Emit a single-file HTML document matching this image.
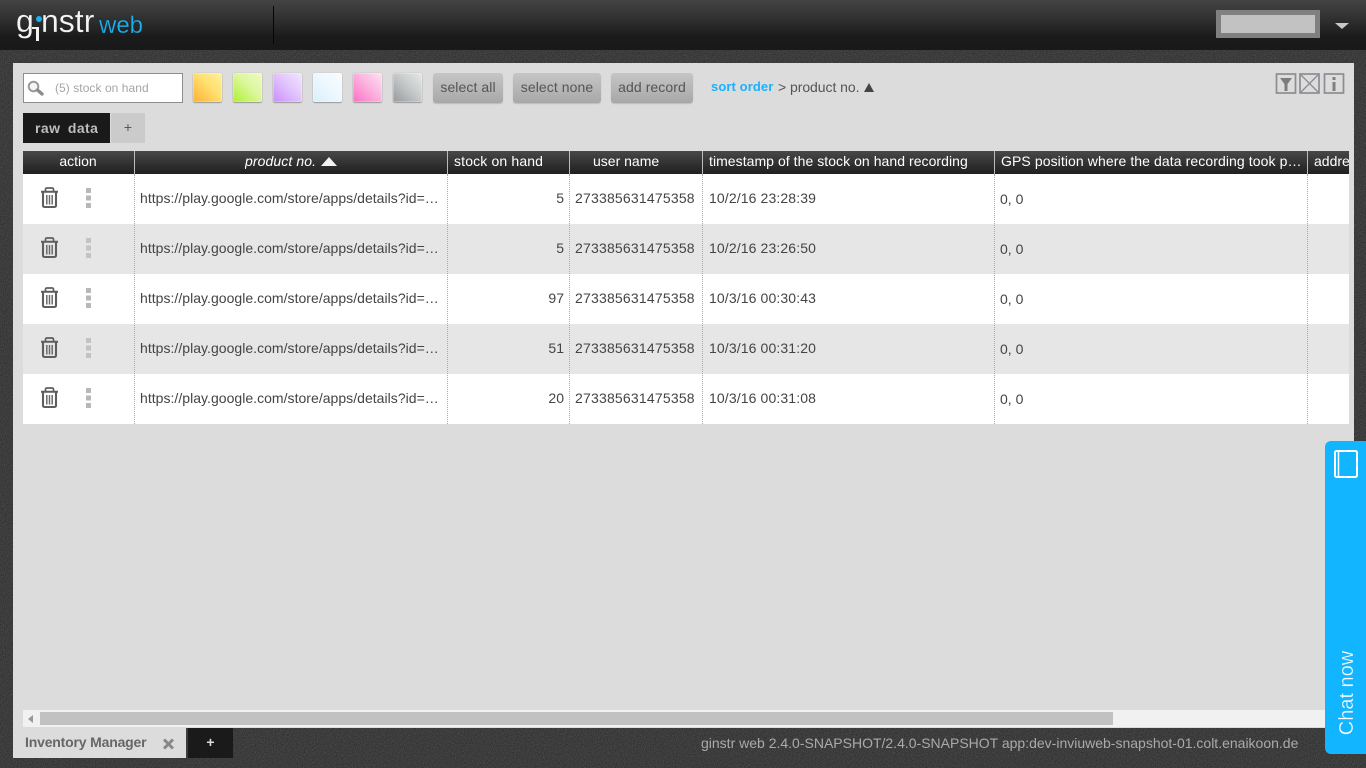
<!DOCTYPE html>
<html>
<head>
<meta charset="utf-8">
<style>
*{box-sizing:border-box}
html,body{margin:0;padding:0;width:1366px;height:768px;overflow:hidden;background:#2e2e2e;font-family:"Liberation Sans",Arial,sans-serif;color:#444}
.a{position:absolute;white-space:nowrap}
#hdr{left:0;top:0;width:1366px;height:50px;background:linear-gradient(#444 0,#2c2c2c 45%,#1a1a1a 75%,#191919 100%)}
#panel{left:13px;top:63px;width:1341px;height:665px;background:#dcdcdc}
.sw{top:73px;width:29px;height:29px;border-radius:2px;box-shadow:0 1px 1px #999,0 0 1px #aaa,inset 0 0 0 1px rgba(255,255,255,.25)}
.btn{top:73px;height:30px;border-radius:3px;background:linear-gradient(#c6c6c6,#a8a8a8);color:#555;font-size:14px;line-height:28px;text-align:center;box-shadow:0 1px 1px #bbb;letter-spacing:.08px}
.hd{top:151px;height:23px;line-height:21px;color:#fff;font-size:14px;background:linear-gradient(#484848,#1f1f1f);overflow:hidden}
.r{left:23px;width:1326px;height:50px}
.sep{width:0;border-left:1px dotted #aaa;top:174px;height:250px}
.hsep{width:1px;background:#bbb;top:151px;height:23px}
.t{font-size:14px;color:#444;line-height:16px}
.u{letter-spacing:.03px}
.n{letter-spacing:.2px}
.d{letter-spacing:.12px}
.lg{font-size:32px;line-height:40px;color:#f4f4f4;-webkit-text-stroke:.15px #262626}
</style>
</head>
<body>
<svg class="a" style="left:0;top:0;width:1366px;height:768px" width="1366" height="768">
<filter id="n"><feTurbulence type="fractalNoise" baseFrequency="0.9" numOctaves="2"/><feColorMatrix values="0 0 0 0 0.5 0 0 0 0 0.5 0 0 0 0 0.5 0 0 0 0.35 -0.06"/></filter>
<rect width="1366" height="768" fill="#2c2c2c"/><rect width="1366" height="768" filter="url(#n)"/>
</svg>

<div class="a" id="hdr"></div>
<div class="a lg" style="left:16px;top:1px">g</div>
<div class="a" style="left:36px;top:27px;width:3px;height:14px;background:#f2f2f2"></div>
<div class="a" style="left:32px;top:27px;width:5px;height:2px;background:#f2f2f2"></div>
<div class="a" style="left:36px;top:16px;width:6px;height:6px;border-radius:50%;background:#19b1ef"></div>
<div class="a lg" style="left:41px;top:1px">nstr</div>
<div class="a" style="left:99px;top:11px;font-size:24px;line-height:30px;color:#19b1ef;-webkit-text-stroke:.2px #222">web</div>
<div class="a" style="left:273px;top:6px;width:1px;height:38px;background:#050505"></div>
<div class="a" style="left:1216px;top:10px;width:104px;height:28px;background:#c2c2c2;border:5px solid #808080"></div>
<div class="a" style="left:1335px;top:23px;width:0;height:0;border-left:7px solid transparent;border-right:7px solid transparent;border-top:6px solid #c8c8c8"></div>

<div class="a" id="panel"></div>

<!-- search -->
<div class="a" style="left:23px;top:73px;width:160px;height:30px;background:#fff;border:1px solid #8e8e8e"></div>
<svg class="a" style="left:26px;top:79px" width="20" height="18" viewBox="0 0 20 18"><circle cx="7.5" cy="7.5" r="4.8" fill="#f4f4f4" stroke="#9a9a9a" stroke-width="2"/><path d="M11.500 11L16 15" stroke="#8c8c8c" stroke-width="3.400" stroke-linecap="round"/></svg>
<div class="a" style="left:55px;top:80px;font-size:12px;line-height:16px;color:#a5a5a5;letter-spacing:.06px">(5) stock on hand</div>

<!-- swatches -->
<div class="a sw" style="left:193px;background:linear-gradient(45deg,#ffb030,#ffdf70 55%,#fff09a)"></div>
<div class="a sw" style="left:233px;background:linear-gradient(45deg,#aef032,#dcf79c 55%,#eefbc4)"></div>
<div class="a sw" style="left:273px;background:linear-gradient(45deg,#cb8dfc,#e2c6fd 55%,#f2e6fe)"></div>
<div class="a sw" style="left:313px;background:linear-gradient(45deg,#d8effd,#eef8fe 55%,#f8fcff)"></div>
<div class="a sw" style="left:353px;background:linear-gradient(45deg,#fb70c4,#fcb4e0 55%,#fde2f2)"></div>
<div class="a sw" style="left:393px;background:linear-gradient(45deg,#969a9c,#c8cbcc 55%,#e6e8e8)"></div>

<div class="a btn" style="left:433px;width:70px">select all</div>
<div class="a btn" style="left:513px;width:88px">select none</div>
<div class="a btn" style="left:611px;width:82px">add record</div>

<div class="a" style="left:711px;top:79px;font-size:13px;line-height:16px;font-weight:bold;color:#19b1ff;letter-spacing:.1px">sort order</div>
<div class="a" style="left:778px;top:79px;font-size:14px;line-height:16px;color:#555;letter-spacing:-.05px">&gt; product no.</div>
<div class="a" style="left:864px;top:83px;width:0;height:0;border-left:5.5px solid transparent;border-right:5.5px solid transparent;border-bottom:9px solid #444"></div>

<!-- top right icons -->
<svg class="a" style="left:1275px;top:73px" width="70" height="21" viewBox="0 0 70 21">
<g fill="none" stroke="#8c8c92" stroke-width="1.700">
<rect x="1.500" y="1" width="19" height="19"/><rect x="25" y="1" width="19" height="19"/><rect x="49.500" y="1" width="19" height="19"/>
<path d="M26 2L43 19M43 2L26 19" stroke-width="1.300"/>
</g>
<path d="M5 5H17L12.500 11V18H9.500V11Z" fill="#7c7c7c"/>
<rect x="57.500" y="4" width="3" height="3" fill="#808080"/><rect x="57.500" y="9" width="3" height="9" fill="#808080"/>
</svg>

<!-- tabs -->
<div class="a" style="left:23px;top:113px;width:87px;height:30px;background:#1a1a1a;color:#bdbdbd;font-size:14px;font-weight:bold;line-height:31px;padding-left:12px;word-spacing:3px;letter-spacing:.45px">raw data</div>
<div class="a" style="left:111px;top:113px;width:34px;height:30px;background:#cbcbcb;color:#556;font-size:14px;line-height:29px;text-align:center">+</div>

<!-- header -->
<div class="a hd" style="left:23px;width:1326px"></div>
<div class="a hd" style="left:23px;width:110px;text-align:center;background:none">action</div>
<div class="a hd" style="left:245px;background:none;font-style:italic;letter-spacing:.1px">product no.</div>
<div class="a" style="left:321px;top:157px;width:0;height:0;border-left:8px solid transparent;border-right:8px solid transparent;border-bottom:9px solid #f2f2f2"></div>
<div class="a hd" style="left:454px;background:none;letter-spacing:.15px">stock on hand</div>
<div class="a hd" style="left:593px;background:none">user name</div>
<div class="a hd" style="left:709px;background:none;letter-spacing:.05px">timestamp of the stock on hand recording</div>
<div class="a hd" style="left:1001px;background:none;letter-spacing:.09px">GPS position where the data recording took p…</div>
<div class="a hd" style="left:1314px;width:35px;background:none">address</div>
<div class="a hsep" style="left:134px"></div><div class="a hsep" style="left:447px"></div><div class="a hsep" style="left:569px"></div><div class="a hsep" style="left:702px"></div><div class="a hsep" style="left:994px"></div><div class="a hsep" style="left:1307px"></div>

<!-- rows -->
<div class="a r" style="top:174px;background:#fff"></div>
<div class="a r" style="top:224px;background:#e6e6e6"></div>
<div class="a r" style="top:274px;background:#fff"></div>
<div class="a r" style="top:324px;background:#e6e6e6"></div>
<div class="a r" style="top:374px;background:#fff"></div>
<div class="a sep" style="left:134px"></div><div class="a sep" style="left:447px"></div><div class="a sep" style="left:569px"></div><div class="a sep" style="left:702px"></div><div class="a sep" style="left:994px"></div><div class="a sep" style="left:1307px"></div>

<svg width="0" height="0" style="position:absolute"><defs>
<g id="tr" fill="none" stroke="#5e5e5e"><path d="M1 4.800H18" stroke-width="2"/><path d="M5.500 4.500V2.500Q5.500 1 7 1H12Q13.500 1 13.500 2.500V4.500" stroke-width="1.700"/><path d="M3 5.500V18.500Q3 20 5 20H14Q16 20 16 18.500V5.500" stroke-width="2.100"/><path d="M6.800 8V17.500M9.500 8V17.500M12.200 8V17.500" stroke-width="1.500" stroke="#6a6a6a"/></g>
<g id="dt" fill="#b8b8b8"><rect width="5" height="5"/><rect y="7.500" width="5" height="5"/><rect y="15" width="5" height="5"/></g>
</defs></svg>

<svg class="a" style="left:40px;top:187px" width="20" height="22"><use href="#tr"/></svg><svg class="a" style="left:86px;top:188px" width="5" height="20"><use href="#dt"/></svg>
<svg class="a" style="left:40px;top:237px" width="20" height="22"><use href="#tr"/></svg><svg class="a" style="left:86px;top:238px;opacity:.75" width="5" height="20"><use href="#dt"/></svg>
<svg class="a" style="left:40px;top:287px" width="20" height="22"><use href="#tr"/></svg><svg class="a" style="left:86px;top:288px" width="5" height="20"><use href="#dt"/></svg>
<svg class="a" style="left:40px;top:337px" width="20" height="22"><use href="#tr"/></svg><svg class="a" style="left:86px;top:338px;opacity:.75" width="5" height="20"><use href="#dt"/></svg>
<svg class="a" style="left:40px;top:387px" width="20" height="22"><use href="#tr"/></svg><svg class="a" style="left:86px;top:388px" width="5" height="20"><use href="#dt"/></svg>

<div class="a t u" style="left:140px;top:190px">https://play.google.com/store/apps/details?id=…</div>
<div class="a t u" style="left:140px;top:240px">https://play.google.com/store/apps/details?id=…</div>
<div class="a t u" style="left:140px;top:290px">https://play.google.com/store/apps/details?id=…</div>
<div class="a t u" style="left:140px;top:340px">https://play.google.com/store/apps/details?id=…</div>
<div class="a t u" style="left:140px;top:390px">https://play.google.com/store/apps/details?id=…</div>

<div class="a t" style="left:448px;width:116px;text-align:right;top:190px">5</div>
<div class="a t" style="left:448px;width:116px;text-align:right;top:240px">5</div>
<div class="a t" style="left:448px;width:116px;text-align:right;top:290px">97</div>
<div class="a t" style="left:448px;width:116px;text-align:right;top:340px">51</div>
<div class="a t" style="left:448px;width:116px;text-align:right;top:390px">20</div>

<div class="a t n" style="left:575px;top:190px">273385631475358</div>
<div class="a t n" style="left:575px;top:240px">273385631475358</div>
<div class="a t n" style="left:575px;top:290px">273385631475358</div>
<div class="a t n" style="left:575px;top:340px">273385631475358</div>
<div class="a t n" style="left:575px;top:390px">273385631475358</div>

<div class="a t d" style="left:709px;top:190px">10/2/16 23:28:39</div>
<div class="a t d" style="left:709px;top:240px">10/2/16 23:26:50</div>
<div class="a t d" style="left:709px;top:290px">10/3/16 00:30:43</div>
<div class="a t d" style="left:709px;top:340px">10/3/16 00:31:20</div>
<div class="a t d" style="left:709px;top:390px">10/3/16 00:31:08</div>

<div class="a t" style="left:1000px;top:191px">0, 0</div>
<div class="a t" style="left:1000px;top:241px">0, 0</div>
<div class="a t" style="left:1000px;top:291px">0, 0</div>
<div class="a t" style="left:1000px;top:341px">0, 0</div>
<div class="a t" style="left:1000px;top:391px">0, 0</div>

<!-- scrollbar -->
<div class="a" style="left:23px;top:710px;width:1331px;height:17px;background:#f1f1f1"></div>
<div class="a" style="left:28px;top:715px;width:0;height:0;border-top:4px solid transparent;border-bottom:4px solid transparent;border-right:5px solid #999"></div>
<div class="a" style="left:40px;top:712px;width:1073px;height:13px;background:#c1c1c1"></div>

<!-- bottom tabs -->
<div class="a" style="left:13px;top:728px;width:173px;height:30px;background:#dcdcdc"></div>
<div class="a" style="left:25px;top:734px;font-size:14px;font-weight:bold;line-height:16px;color:#666;letter-spacing:-.18px">Inventory Manager</div>
<svg class="a" style="left:162px;top:737px" width="13" height="14"><path d="M2 2.500L11 11.500M11 2.500L2 11.500" stroke="#888" stroke-width="3"/></svg>
<div class="a" style="left:188px;top:728px;width:45px;height:30px;background:#1a1a1a;color:#ddd;font-size:14px;font-weight:bold;line-height:28px;text-align:center">+</div>
<div class="a" style="left:701px;top:735px;font-size:14px;line-height:16px;color:#aaa">ginstr web 2.4.0-SNAPSHOT/2.4.0-SNAPSHOT app:dev-inviuweb-snapshot-01.colt.enaikoon.de</div>

<!-- chat -->
<div class="a" style="left:1325px;top:441px;width:41px;height:313px;background:#12b5ff;border-radius:6px 0 0 6px"></div>
<svg class="a" style="left:1333px;top:449px" width="26" height="30" viewBox="0 0 26 30" fill="none" stroke="#fff" stroke-width="2"><rect x="2" y="2" width="22" height="26" rx="1.500"/><path d="M5.500 2V28" stroke-width="1.500"/></svg>
<div class="a" style="left:1347px;top:693px;font-size:20px;line-height:24px;color:#fff;-webkit-text-stroke:.3px #12b5ff;transform:translate(-50%,-50%) rotate(-90deg)">Chat now</div>
</body>
</html>
